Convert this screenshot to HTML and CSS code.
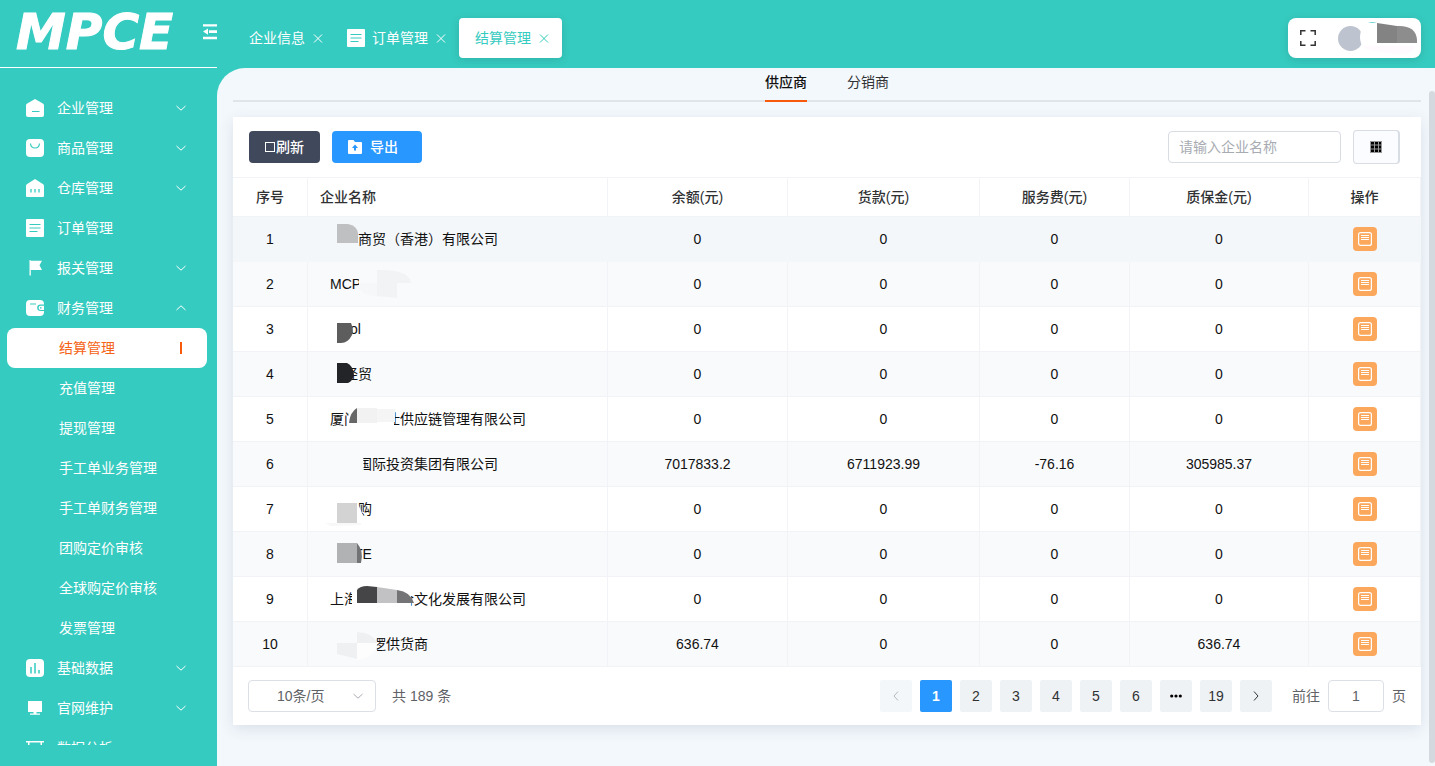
FILE: index.html
```html
<!DOCTYPE html>
<html lang="zh-CN">
<head>
<meta charset="utf-8">
<meta name="viewport" content="width=device-width, initial-scale=1">
<title>结算管理</title>
<link rel="stylesheet" href="styles.css">
</head>
<body>
<svg class="sprite" aria-hidden="true">
  <symbol id="i-down" viewBox="0 0 10 10"><path d="M.5 3 5 7.2 9.5 3" fill="none" stroke="currentColor"/></symbol>
  <symbol id="i-up" viewBox="0 0 10 10"><path d="M.5 7 5 2.8 9.5 7" fill="none" stroke="currentColor"/></symbol>
  <symbol id="i-close" viewBox="0 0 12 12"><path d="M2 2.500 10 10.500M10 2.500 2 10.500" fill="none" stroke="currentColor"/></symbol>
  <symbol id="i-list" viewBox="0 0 18 18"><rect width="18" height="18" rx="1" fill="#fff"/><path d="M3.500 5.500h11M3.500 9h11M3.500 12.500h8" stroke="#36cbc0" stroke-width="1.200" fill="none"/></symbol>
  <symbol id="i-note" viewBox="0 0 14 14"><rect x=".6" y=".6" width="12.8" height="12.8" rx="2" fill="none" stroke="#fff" stroke-width="1.200"/><path d="M3 3.500h8M3 5.500h8M3 7.500h8" stroke="#fff"/></symbol>
</svg>
<div class="app">
  <aside class="sidebar">
    <div class="brand">
      <span class="logo">MPCE</span>
      <button class="collapse" aria-label="收起菜单"><svg width="14" height="16" viewBox="0 0 14 16"><path d="M0 .2h14v2.400H0zM6 6.200h8v2.800H6zM0 12.800h14v2.400H0zM0 7.600 5 4.400v6.400z" fill="#fff"/></svg></button>
    </div>
    <nav class="menu">
      <button class="item"><svg class="ico" viewBox="0 0 18 18"><path d="M9 0 16.800 4.600Q18 5.300 18 6.600V16a2 2 0 0 1-2 2H2a2 2 0 0 1-2-2V6.600Q0 5.300 1.200 4.600Z" fill="#fff"/><path d="M6 12.500h7.500" stroke="#36cbc0"/></svg>企业管理<svg class="arrow"><use href="#i-down"/></svg></button>
      <button class="item"><svg class="ico" viewBox="0 0 18 18"><rect width="18" height="18" rx="4" fill="#fff"/><path d="M4.500 4.500c.5 6 8.500 6 9 0" fill="none" stroke="#36cbc0" stroke-width="1.200"/></svg>商品管理<svg class="arrow"><use href="#i-down"/></svg></button>
      <button class="item"><svg class="ico" viewBox="0 0 18 18"><path d="M9 0 17.200 5.200Q18 5.800 18 6.600V17a1 1 0 0 1-1 1H1a1 1 0 0 1-1-1V6.600Q0 5.800.8 5.200Z" fill="#fff"/><path d="M5 10v3.500M9 10v3.500M13 10v3.500" stroke="#36cbc0" stroke-width="1.300"/></svg>仓库管理<svg class="arrow"><use href="#i-down"/></svg></button>
      <a class="item" href="#orders"><svg class="ico"><use href="#i-list"/></svg>订单管理</a>
      <button class="item"><svg class="ico" viewBox="0 0 18 18"><path d="M3.500 1h1v.8H16L13.500 6.300 16 11H4.800v5.500H3.500z" fill="#fff"/></svg>报关管理<svg class="arrow"><use href="#i-down"/></svg></button>
      <button class="item" aria-expanded="true"><svg class="ico" viewBox="0 0 18 18"><path d="M4 1h10a4 4 0 0 1 4 4v.5h-3.500a3.300 3.300 0 0 0 0 6.600H18V13a4 4 0 0 1-4 4H4a4 4 0 0 1-4-4V5a4 4 0 0 1 4-4z" fill="#fff"/><path d="M4 5h6" stroke="#36cbc0"/><path d="M18 6.800h-3.300a2.100 2.100 0 0 0 0 4.200H18z" fill="#fff"/><circle cx="14.800" cy="8.900" r=".8" fill="#36cbc0"/></svg>财务管理<svg class="arrow"><use href="#i-up"/></svg></button>
      <a class="item sub active" href="#settle" aria-current="page">结算管理</a>
      <a class="item sub" href="#recharge">充值管理</a>
      <a class="item sub" href="#withdraw">提现管理</a>
      <a class="item sub" href="#manual-biz">手工单业务管理</a>
      <a class="item sub" href="#manual-fin">手工单财务管理</a>
      <a class="item sub" href="#group-price">团购定价审核</a>
      <a class="item sub" href="#global-price">全球购定价审核</a>
      <a class="item sub" href="#invoice">发票管理</a>
      <button class="item"><svg class="ico" viewBox="0 0 18 18"><rect width="18" height="18" rx="4" fill="#fff"/><path d="M5 8v6.500M9 4v10.500M13 11v3.500" stroke="#36cbc0" stroke-width="1.500"/></svg>基础数据<svg class="arrow"><use href="#i-down"/></svg></button>
      <button class="item"><svg class="ico" viewBox="0 0 18 18"><path d="M2 2h14v11H2zM7.500 13h3v1.500h-3zM4 14.500h10v1.300H4z" fill="#fff"/></svg>官网维护<svg class="arrow"><use href="#i-down"/></svg></button>
      <button class="item"><svg class="ico" viewBox="0 0 18 18"><path d="M0 2h18v1.500H0zM2 3.500h1.500V13H2zM14.500 3.500H16V13h-1.500zM2 12h14v1.500H2z" fill="#fff"/></svg>数据分析<svg class="arrow"><use href="#i-down"/></svg></button>
    </nav>
  </aside>

  <div class="workspace">
    <header class="topbar">
      <div class="pages">
        <div class="page"><a href="#company">企业信息</a><button aria-label="关闭企业信息"><svg><use href="#i-close"/></svg></button></div>
        <div class="page"><svg class="ico"><use href="#i-list"/></svg><a href="#orders">订单管理</a><button aria-label="关闭订单管理"><svg><use href="#i-close"/></svg></button></div>
        <div class="page current"><a href="#settle">结算管理</a><button aria-label="关闭结算管理"><svg><use href="#i-close"/></svg></button></div>
      </div>
      <div class="user">
        <button class="full" aria-label="全屏"><svg width="16" height="16" viewBox="0 0 16 16"><path d="M.8 5V.8H5.500M10.500.8h4.700V5M15.200 11v4.200h-4.700M5.500 15.200H.8V11" fill="none" stroke="#333" stroke-width="1.500"/></svg></button>
        <button class="account" aria-label="账户"><svg width="84" height="40" viewBox="0 0 84 40"><circle cx="13.500" cy="20.500" r="12.500" fill="#bdc4cf"/><ellipse cx="35" cy="19" rx="12" ry="15" fill="#fff"/><path d="M27 28h51q-1 7-12 8-24-1-39-6z" fill="#fffafd"/><path d="M31 5q4-1.500 9 0z" fill="#36cbc0"/><path d="M40 5l20 3v17H40z" fill="#838384"/><path d="M60 8q19-1 20 14v3H60z" fill="#8d8d8e"/></svg></button>
      </div>
    </header>

    <main class="content">
      <div class="tabs" role="tablist">
        <button class="tab selected" role="tab" aria-selected="true">供应商</button>
        <button class="tab" role="tab" aria-selected="false">分销商</button>
      </div>
      <section class="card">
        <div class="toolbar">
          <button class="btn dark"><span class="box"></span>刷新</button>
          <button class="btn blue"><svg width="14" height="14" viewBox="0 0 14 14"><path d="M1 0h4.500L7 2h6a1 1 0 0 1 1 1v10a1 1 0 0 1-1 1H1a1 1 0 0 1-1-1V1a1 1 0 0 1 1-1z" fill="#fff"/><path d="M7 4.500 10 8H8v2.500H6V8H4z" fill="#2897ff"/></svg>导出</button>
          <input class="search" type="text" placeholder="请输入企业名称" aria-label="企业名称">
          <button class="grid" aria-label="列设置"><svg width="12" height="12" viewBox="0 0 12 12"><path d="M0 0h12v12H0z" fill="#999"/><path d="M1 1h3v2.500H1zM5 1h3v2.500H5zM9 1h2v2.500H9zM1 4.500h3v3H1zM5 4.500h3v3H5zM9 4.500h2v3H9zM1 8.500h3V11H1zM5 8.500h3V11H5zM9 8.500h2V11H9z"/></svg></button>
        </div>
        <table class="data">
          <colgroup><col class="c-no"><col class="c-name"><col class="c-bal"><col class="c-goods"><col class="c-fee"><col class="c-dep"><col class="c-act"></colgroup>
          <thead><tr><th>序号</th><th class="name">企业名称</th><th>余额(元)</th><th>货款(元)</th><th>服务费(元)</th><th>质保金(元)</th><th>操作</th></tr></thead>
          <tbody>
            <tr class="hover"><td>1</td><td class="name"><span class="gap g28"></span>商贸（香港）有限公司<svg class="mask" viewBox="308 217 299 44"><path d="M337 224h11q9 2 10 9v10h-21z" fill="#bfc0c1"/></svg></td><td>0</td><td>0</td><td>0</td><td>0</td><td><button class="act" aria-label="查看明细"><svg><use href="#i-note"/></svg></button></td></tr>
            <tr><td>2</td><td class="name">MCP<svg class="mask" viewBox="308 262 299 44"><path d="M359 270h20v26h-20z" fill="#f9fafc"/><path d="M360 283h17v14q-14-2-17-8z" fill="#f6f7f8"/><path d="M377 270q32-1 34 13h-14v15l-20-2z" fill="#f2f3f5"/></svg></td><td>0</td><td>0</td><td>0</td><td>0</td><td><button class="act" aria-label="查看明细"><svg><use href="#i-note"/></svg></button></td></tr>
            <tr><td>3</td><td class="name"><span class="gap g20"></span>ol<svg class="mask" viewBox="308 307 299 44"><path d="M337 323h14q3 7 1 12-4 8-11 8h-4z" fill="#5d5d5e"/></svg></td><td>0</td><td>0</td><td>0</td><td>0</td><td><button class="act" aria-label="查看明细"><svg><use href="#i-note"/></svg></button></td></tr>
            <tr><td>4</td><td class="name"><span class="gap g14"></span>经贸<svg class="mask" viewBox="308 352 299 44"><path d="M337 363h10q6 3 7 11-1 7-6 9h-11z" fill="#232427"/></svg></td><td>0</td><td>0</td><td>0</td><td>0</td><td><button class="act" aria-label="查看明细"><svg><use href="#i-note"/></svg></button></td></tr>
            <tr><td>5</td><td class="name">厦门<span class="gap g28"></span>仕供应链管理有限公司<svg class="mask" viewBox="308 397 299 44"><path d="M349 406h45v26h-45z" fill="#fff"/><path d="M349 423q1-11 8-15v15z" fill="#676768"/><path d="M357 408h20v15h-20z" fill="#f2f2f3"/><path d="M377 409h18v13h-18z" fill="#f5f5f6"/></svg></td><td>0</td><td>0</td><td>0</td><td>0</td><td><button class="act" aria-label="查看明细"><svg><use href="#i-note"/></svg></button></td></tr>
            <tr><td>6</td><td class="name"><span class="gap g28"></span>国际投资集团有限公司<svg class="mask" viewBox="308 442 299 44"><path d="M356 452h7l1 24h-8z" fill="#f9fafc"/></svg></td><td>7017833.2</td><td>6711923.99</td><td>-76.16</td><td>305985.37</td><td><button class="act" aria-label="查看明细"><svg><use href="#i-note"/></svg></button></td></tr>
            <tr><td>7</td><td class="name"><span class="gap g28"></span>购<svg class="mask" viewBox="308 487 299 44"><path d="M355 506l4 0 5 12-5 4h-5z" fill="#fff"/><path d="M325 523h36v2l-30 1z" fill="#f8f8f9"/><path d="M337 503h20v20h-20z" fill="#d3d3d4"/></svg></td><td>0</td><td>0</td><td>0</td><td>0</td><td><button class="act" aria-label="查看明细"><svg><use href="#i-note"/></svg></button></td></tr>
            <tr><td>8</td><td class="name"><span class="gap g24"></span>TE<svg class="mask" viewBox="308 532 299 44"><path d="M337 543h20v20h-20z" fill="#b1b2b4"/><path d="M357 543q7 8 4 20h-4z" fill="#727375"/></svg></td><td>0</td><td>0</td><td>0</td><td>0</td><td><button class="act" aria-label="查看明细"><svg><use href="#i-note"/></svg></button></td></tr>
            <tr><td>9</td><td class="name">上海<span class="gap g42"></span>合文化发展有限公司<svg class="mask" viewBox="308 577 299 44"><path d="M352 587h59v20h-59z" fill="#fff"/><path d="M357 603v-13q3-4 10-4l10 1v16z" fill="#454547"/><path d="M377 587l20 3v13h-20z" fill="#c2c2c4"/><path d="M397 590q14 2 17 13h-17z" fill="#747476"/></svg></td><td>0</td><td>0</td><td>0</td><td>0</td><td><button class="act" aria-label="查看明细"><svg><use href="#i-note"/></svg></button></td></tr>
            <tr><td>10</td><td class="name"><span class="gap g42"></span>逻供货商<svg class="mask" viewBox="308 622 299 44"><path d="M370 634h6l1 18h-7z" fill="#f9fafc"/><path d="M337 643h20v16l-20-5z" fill="#eff0f2"/><path d="M357 632q16 1 20 11h-20z" fill="#eff0f2"/><path d="M357 643h20q-1 14-20 17z" fill="#fdfdfe"/></svg></td><td>636.74</td><td>0</td><td>0</td><td>636.74</td><td><button class="act" aria-label="查看明细"><svg><use href="#i-note"/></svg></button></td></tr>
          </tbody>
        </table>
        <footer class="footer">
          <div class="size"><select aria-label="每页条数"><option>10条/页</option></select><svg class="arrow"><use href="#i-down"/></svg></div>
          <span>共 189 条</span>
          <nav class="pager" aria-label="分页">
            <button class="pg off" disabled aria-label="上一页"><svg viewBox="0 0 10 10"><path d="M7 .5 3 5l4 4.500" fill="none" stroke="currentColor"/></svg></button>
            <button class="pg on" aria-current="page">1</button>
            <button class="pg">2</button>
            <button class="pg">3</button>
            <button class="pg">4</button>
            <button class="pg">5</button>
            <button class="pg">6</button>
            <button class="pg" aria-label="更多页"><svg class="dots" viewBox="0 0 12 4"><circle cx="1.700" cy="2" r="1.600"/><circle cx="6" cy="2" r="1.600"/><circle cx="10.300" cy="2" r="1.600"/></svg></button>
            <button class="pg">19</button>
            <button class="pg" aria-label="下一页"><svg viewBox="0 0 10 10"><path d="M3 .5 7 5 3 9.500" fill="none" stroke="currentColor"/></svg></button>
          </nav>
          <label class="jump">前往<input type="text" value="1">页</label>
        </footer>
      </section>
      <div class="scrollbar"></div>
    </main>
  </div>
</div>
</body>
</html>
```
FILE: styles.css
```css
* { box-sizing: border-box; }

body {
  margin: 0;
  background: #36cbc0;
  color: #606266;
  font: 14px/20px "Liberation Sans", "Noto Sans CJK SC", sans-serif;
}

button, input, select {
  margin: 0;
  padding: 0;
  border: 0;
  background: none;
  color: inherit;
  font: inherit;
}

a { color: inherit; text-decoration: none; }
svg { display: block; flex: none; }
.sprite { position: absolute; width: 0; height: 0; }
.app { display: flex; height: 100vh; overflow: hidden; }

/* Sidebar */
.sidebar {
  display: flex;
  flex: none;
  flex-direction: column;
  width: 217px;
  padding-bottom: 21px;
  color: #fff;
}

.brand {
  display: flex;
  flex: none;
  align-items: center;
  justify-content: space-between;
  height: 68px;
  padding: 0 0 4px 16px;
  border-bottom: 1px solid #fff;
}

.logo {
  font: italic bold 50px/56px "DejaVu Sans", sans-serif;
  -webkit-text-stroke: 1px #fff;
}

.menu {
  display: flex;
  flex: 1;
  flex-direction: column;
  min-height: 0;
  padding: 20px 10px 0 7px;
  overflow: hidden;
}

.item {
  display: flex;
  flex: none;
  align-items: center;
  gap: 12px;
  height: 40px;
  padding: 0 21px 0 20px;
  border-radius: 8px;
  text-align: left;
}

.ico { width: 18px; height: 18px; }
.arrow { width: 10px; height: 10px; }
.item .arrow { margin-left: auto; }
.item .ico { margin-left: -1px; margin-right: 1px; }
.sub { padding: 0 25px 0 52px; }
.active { background: #fff; color: #f56215; }

.active::after {
  width: 2px;
  height: 12px;
  margin-left: auto;
  background: #f9590b;
  content: "";
}

/* Top bar */
.workspace { display: flex; flex: 1; flex-direction: column; min-width: 0; }

.topbar {
  display: flex;
  flex: none;
  align-items: center;
  justify-content: space-between;
  height: 68px;
  padding: 8px 14px 0 16px;
}

.pages { display: flex; }

.page {
  display: flex;
  align-items: center;
  gap: 7px;
  height: 40px;
  padding: 0 12px 0 16px;
  border-radius: 4px;
  color: #fff;
}

.page .ico { margin-left: -5px; }
.page button svg { width: 12px; height: 12px; }
.page.current { background: #fff; color: #36cbc0; box-shadow: 0 2px 10px rgba(0, 0, 0, .12); }

.user {
  display: flex;
  align-items: center;
  gap: 21px;
  height: 40px;
  padding-left: 12px;
  border-radius: 8px;
  background: #fff;
  box-shadow: 0 2px 10px rgba(0, 0, 0, .12);
}

/* Content */
.content {
  position: relative;
  flex: 1;
  min-height: 0;
  padding: 0 14px 0 16px;
  border-radius: 28px 0 0 0;
  background: #f3f8fc;
}

.tabs {
  display: flex;
  justify-content: center;
  gap: 40px;
  height: 34px;
  margin-bottom: 15px;
  border-bottom: 2px solid #e0e5ea;
}

.tab { height: 34px; padding-bottom: 4px; border-bottom: 2px solid transparent; color: #303133; }
.selected { border-color: #f9590b; color: #111; font-weight: 500; }

.card {
  background: #fff;
  box-shadow: 0 4px 14px rgba(30, 60, 90, .12);
}

.toolbar {
  display: flex;
  align-items: center;
  gap: 12px;
  height: 60px;
  padding: 0 21px 0 16px;
}

.btn {
  display: flex;
  align-items: center;
  height: 32px;
  border-radius: 4px;
  color: #fff;
  font-weight: 500;
}

.dark { gap: 1px; padding: 0 16px; background: #40485c; }
.blue { gap: 8px; padding: 0 24px 0 16px; background: #2897ff; }
.box { width: 10px; height: 10px; border: 1px solid #fff; }

.search {
  width: 173px;
  height: 32px;
  margin-left: auto;
  padding: 0 10px;
  border: 1px solid #d8dce3;
  border-radius: 4px;
}

.search::placeholder { color: #a8abb2; }

.grid {
  display: grid;
  place-items: center;
  width: 47px;
  height: 34px;
  border: 1px solid #d8dce3;
  border-right-width: 2px;
  border-radius: 4px;
  background: #fafcff;
}

/* Table */
.data {
  width: 100%;
  border-collapse: separate;
  border-spacing: 0;
  border-top: 1px solid #f1f3f6;
  color: #111;
  table-layout: fixed;
  text-align: center;
}

.c-no { width: 75px; }
.c-name { width: 300px; }
.c-bal { width: 180px; }
.c-goods { width: 192px; }
.c-fee { width: 150px; }
.c-dep { width: 179px; }
.c-act { width: 112px; }

.data th, .data td {
  height: 45px;
  padding: 0;
  border-right: 1px solid #f1f3f6;
  border-bottom: 1px solid #f1f3f6;
}

.data th { height: 39px; color: #303133; font-weight: 500; }
.data .name { position: relative; padding-left: 22px; text-align: left; white-space: nowrap; }
.data th.name { padding-left: 12px; }
.data tr:nth-child(even) td { background: #f9fafc; }
.data .hover td { border-color: #f3f7fa; background: #f3f7fa; }
.gap { display: inline-block; }
.g14 { width: 14px; }
.g20 { width: 20px; }
.g24 { width: 24px; }
.g28 { width: 28px; }
.g42 { width: 42px; }
.mask { position: absolute; top: 0; left: 0; width: 299px; height: 44px; }

.act {
  display: grid;
  place-items: center;
  width: 24px;
  height: 24px;
  margin: 0 auto;
  border-radius: 4px;
  background: #fba75c;
}

.act svg { width: 14px; height: 14px; }

/* Pagination */
.footer {
  display: flex;
  align-items: center;
  gap: 16px;
  height: 58px;
  padding: 0 15px;
}

.size { position: relative; width: 128px; }

.size select {
  width: 100%;
  height: 32px;
  padding: 0 28px;
  border: 1px solid #dcdfe6;
  border-radius: 4px;
  appearance: none;
}

.size .arrow { position: absolute; top: 11px; right: 13px; color: #a8abb2; pointer-events: none; }
.pager { display: flex; gap: 8px; margin-left: auto; }

.pg {
  display: grid;
  place-items: center;
  width: 32px;
  height: 32px;
  border-radius: 2px;
  background: #eff2f5;
  color: #303133;
}

.pg svg { width: 10px; height: 10px; }
.pg .dots { width: 12px; height: 4px; }
.pg.off { background: #f4f7fa; color: #b4b8bf; }
.pg.on { background: #2897ff; color: #fff; font-weight: bold; }
.jump { display: flex; align-items: center; gap: 8px; padding-left: 4px; }

.jump input {
  width: 56px;
  height: 32px;
  border: 1px solid #dcdfe6;
  border-radius: 4px;
  text-align: center;
}

.scrollbar {
  position: absolute;
  top: 23px;
  right: 0;
  bottom: 3px;
  width: 6px;
  border-radius: 3px;
  background: #d3d9de;
}
```
